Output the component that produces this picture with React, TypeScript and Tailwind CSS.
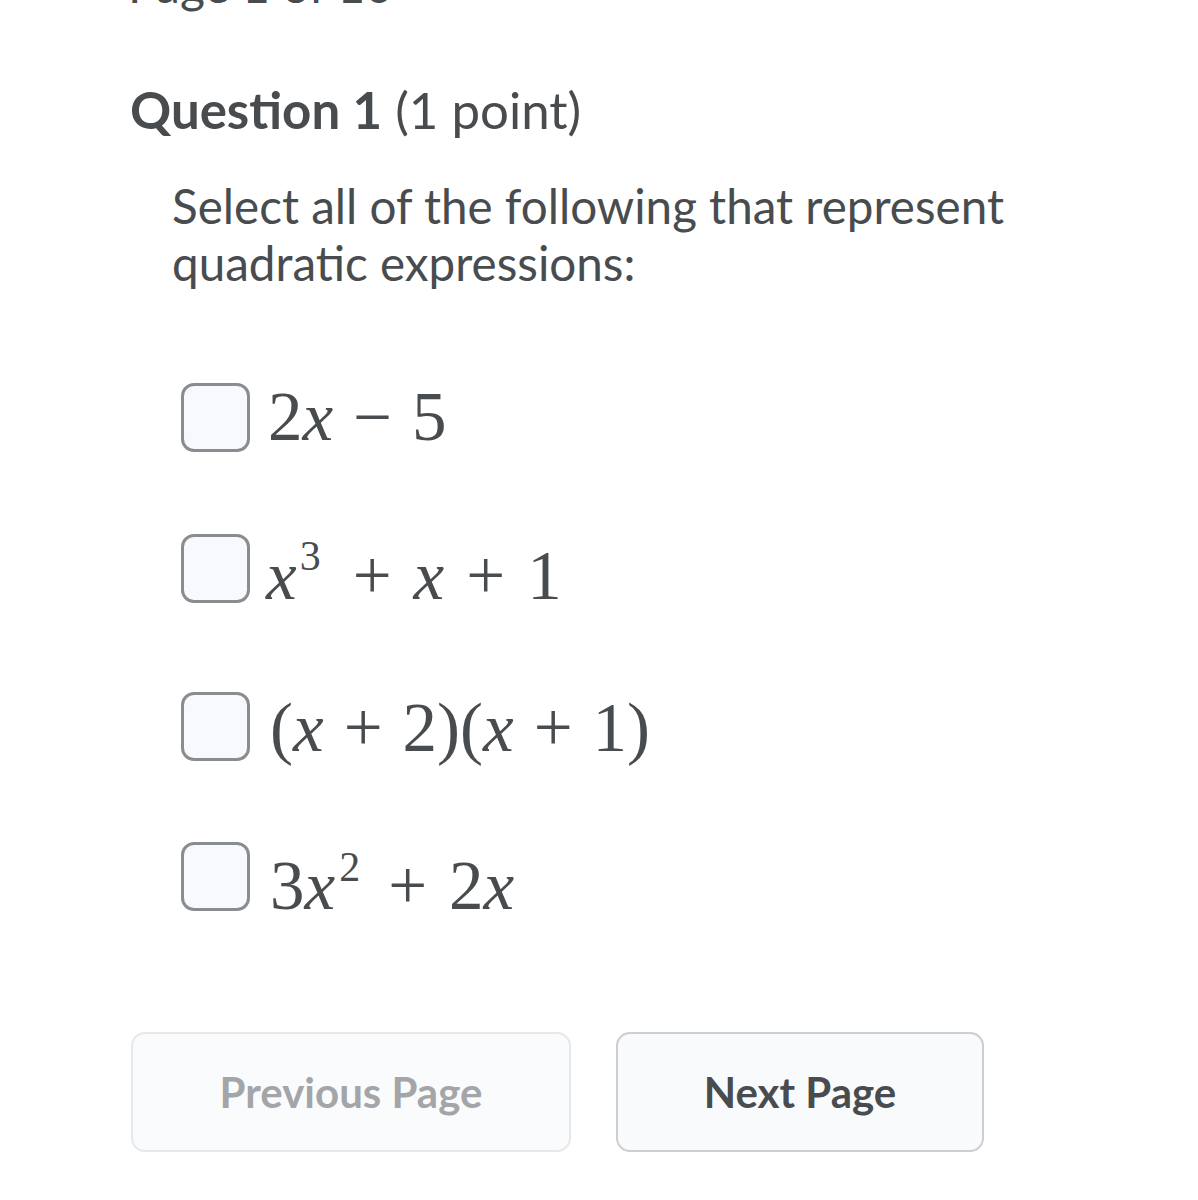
import React from "react";

const serif = { fontFamily: '"Liberation Serif", "Times New Roman", serif' };

function Box() {
  return (
    <div className="w-[69px] h-[69px] shrink-0 rounded-[13px] border-[3px] border-[#8a8d90] bg-[#f8f9fc]" />
  );
}

function Op({ children }: { children: React.ReactNode }) {
  return <span className="mx-[20px]">{children}</span>;
}

export default function App() {
  return (
    <div className="min-h-[1200px] bg-white text-[#494c4e] font-['Lato',sans-serif] overflow-hidden">
      <div className="pl-[128px] flex flex-col items-start">
        <div className="-mt-[39px] text-[48px] leading-[48px] text-[#494c4e]">Page 1 of 10</div>

        <h1 className="mt-[73px] text-[51px] leading-[56px] pl-[2px]">
          <span className="font-bold">Question 1</span> (1 point)
        </h1>

        <p className="mt-[39px] ml-[44px] text-[47.6px] leading-[57px] w-[900px]">
          Select all of the following that represent
          <br />
          quadratic expressions:
        </p>

        <div className="ml-[53px] mt-[92px] flex flex-col">
          <div className="flex items-start h-[69px]">
            <Box />
            <span className="ml-[18px] text-[69px] leading-[69px] whitespace-nowrap" style={serif}>
              2<i>x</i>
              <Op>−</Op>5
            </span>
          </div>

          <div className="flex items-start h-[69px] mt-[82px]">
            <Box />
            <span className="ml-[16px] mt-[8px] text-[69px] leading-[69px] whitespace-nowrap" style={serif}>
              <i>x</i>
              <span className="relative -top-[29px] text-[42px] leading-none ml-[3px]">3</span>
              <span className="ml-[32px]">+</span>
              <span className="mx-[22px]">
                <i>x</i>
              </span>
              +<span className="ml-[22px]">1</span>
            </span>
          </div>

          <div className="flex items-start h-[69px] mt-[89px]">
            <Box />
            <span className="ml-[20px] mt-[2px] text-[69px] leading-[69px] whitespace-nowrap" style={serif}>
              (<i>x</i>
              <Op>+</Op>2)(<i>x</i>
              <Op>+</Op>1)
            </span>
          </div>

          <div className="flex items-start h-[69px] mt-[81px]">
            <Box />
            <span className="ml-[20px] mt-[10px] text-[69px] leading-[69px] whitespace-nowrap" style={serif}>
              3<i>x</i>
              <span className="relative -top-[28px] text-[42px] leading-none ml-[4px]">2</span>
              <span className="ml-[28px] mr-[22px]">+</span>2<i>x</i>
            </span>
          </div>
        </div>

        <div className="mt-[121px] ml-[3px] flex gap-[45px]">
          <button className="w-[440px] h-[120px] rounded-[14px] border-2 border-[#e6e8ea] bg-[#fafbfd] text-[42px] font-bold text-[#a3a5a8]">
            Previous Page
          </button>
          <button className="w-[368px] h-[120px] rounded-[14px] border-2 border-[#cbced2] bg-[#f9fafc] text-[42px] font-bold text-[#494c4e]">
            Next Page
          </button>
        </div>
      </div>
    </div>
  );
}
